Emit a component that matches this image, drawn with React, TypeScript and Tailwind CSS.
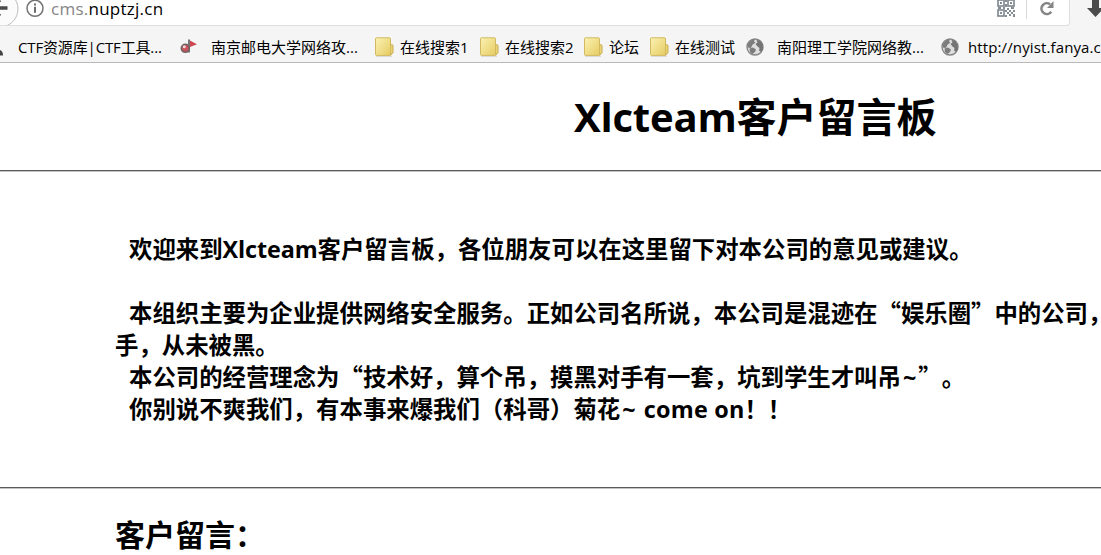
import type { ReactNode } from 'react'

function BackIcon() {
  return (
    <svg width="20" height="28" viewBox="0 0 20 28" className="shrink-0">
      <circle cx="0" cy="9" r="18" fill="#fbfbfb" stroke="#bdbdbd" />
      <path d="M-9 8H7.5M-9 8l9-8M-9 8l9 8" fill="none" stroke="#4a4a4a" strokeWidth="3.4" />
    </svg>
  )
}

function InfoIcon() {
  return (
    <svg width="18" height="18" viewBox="0 0 18 18" className="shrink-0">
      <circle cx="9" cy="8.3" r="8" fill="none" stroke="#737373" strokeWidth="1.5" />
      <rect x="8" y="3.5" width="2" height="2" fill="#6b6b6b" />
      <rect x="8" y="6.8" width="2" height="6" fill="#6b6b6b" />
    </svg>
  )
}

function QrIcon() {
  return (
    <svg width="18" height="17" viewBox="0 1 18 17" className="shrink-0">
      <g fill="none" stroke="#838b94" strokeWidth="1.7">
        <rect x="1" y="1" width="6" height="6" />
        <rect x="11" y="1" width="6" height="6" />
        <rect x="1" y="11" width="6" height="6" />
      </g>
      <path
        d="M3 3h2v2H3zM13 3h2v2h-2zM3 13h2v2H3zM8 1h2v2H8zM8 5h2v3H8zM1 8h3v2H1zM6 8h2v2H6zM10 9h2v2h-2zM14 8h3v2h-3zM8 11h2v2H8zM12 11h2v2h-2zM16 11h2v2h-2zM10 13h2v2h-2zM14 13h2v2h-2zM8 16h2v2H8zM12 15h2v2h-2zM16 15h2v3h-2z"
        fill="#838b94"
      />
    </svg>
  )
}

function ReloadIcon() {
  return (
    <svg width="16" height="18" viewBox="0 0 16 18" className="shrink-0">
      <path d="M10 4.2A5.4 5.4 0 1 0 11.3 11.8" fill="none" stroke="#858585" strokeWidth="2.6" />
      <path d="M13.5 1v7H7z" fill="#858585" />
    </svg>
  )
}

function DownloadIcon() {
  return (
    <svg width="14" height="18" viewBox="0 0 14 18" className="shrink-0">
      <path d="M5 0h7v8h5L8.5 17 0 8h5z" fill="#4c4c4c" />
    </svg>
  )
}

function FlagIcon() {
  return (
    <svg width="18" height="16" viewBox="0 0 18 16" className="shrink-0">
      <path d="M9 1l8 4.2L10 8z" fill="#cf4652" />
      <path d="M9 0.5v13" stroke="#777" strokeWidth="2" />
      <circle cx="5.3" cy="9.3" r="4" fill="#c9525d" stroke="#6e6262" strokeWidth="1.6" />
      <circle cx="4.3" cy="7.8" r="1.5" fill="#e9d9d9" />
    </svg>
  )
}

function FolderIcon() {
  return (
    <svg width="19" height="20" viewBox="0 0 19 20" className="shrink-0">
      <defs>
        <linearGradient id="folder" x1="0" y1="0" x2="1" y2="1">
          <stop offset="0" stopColor="#fbf3b4" />
          <stop offset="1" stopColor="#e6cb62" />
        </linearGradient>
      </defs>
      <path d="M1 19.3h16" stroke="#d5d5d0" />
      <path d="M13 7.5h3.5q1.5 0 1.5 1.5v6.5l-2 2.5h-3z" fill="#ead373" stroke="#c9ac50" />
      <rect x="0.5" y="0.8" width="15" height="17.6" rx="1" fill="url(#folder)" stroke="#d2b95f" />
    </svg>
  )
}

function GlobeIcon() {
  return (
    <svg width="18" height="18" viewBox="0 0 18 18" className="shrink-0">
      <circle cx="9" cy="9" r="8" fill="#dedede" stroke="#858585" strokeWidth="1.4" />
      <path d="M2 6q2.5-4.5 7-5l-1 2.5 1.5 1-3 2.2L5 10l-3.5-.6z" fill="#7c7c7c" />
      <path d="M10.5 2l3.5.5 2.8 4.5.2 4-2 3-2-1.5.5-2.5-2-1.5-2-2.5 2-1.5z" fill="#747474" />
      <path d="M3.5 10.5l3.5-1 3 2-1 2.5-2.5 2-2.5-2z" fill="#7c7c7c" />
    </svg>
  )
}

function AccountIcon() {
  return (
    <svg width="4" height="18" viewBox="0 0 4 18" className="shrink-0">
      <path d="M0 12q3 1 3 5.5H0z" fill="#444" />
    </svg>
  )
}

interface Bookmark {
  icon: ReactNode
  label: string
  width: string
  gap: string
}

const bookmarks: Bookmark[] = [
  { icon: <AccountIcon />, label: 'CTF资源库|CTF工具...', width: 'w-[180px] tracking-[-0.15px]', gap: 'gap-[14px]' },
  { icon: <FlagIcon />, label: '南京邮电大学网络攻...', width: 'w-[195px]', gap: 'gap-[13px]' },
  { icon: <FolderIcon />, label: '在线搜索1', width: 'w-[105px]', gap: 'gap-[6px]' },
  { icon: <FolderIcon />, label: '在线搜索2', width: 'w-[104px]', gap: 'gap-[6px]' },
  { icon: <FolderIcon />, label: '论坛', width: 'w-[66px]', gap: 'gap-[6px]' },
  { icon: <FolderIcon />, label: '在线测试', width: 'w-[96px]', gap: 'gap-[6px]' },
  { icon: <GlobeIcon />, label: '南阳理工学院网络教...', width: 'w-[195px]', gap: 'gap-[13px]' },
  { icon: <GlobeIcon />, label: 'http://nyist.fanya.c', width: 'w-[170px] tracking-[0.12px]', gap: 'gap-[9px]' },
]

function Latin({ children }: { children: ReactNode }) {
  return <span className="font-['Open_Sans','Noto_Sans_CJK_SC',sans-serif] tracking-[-0.005em]">{children}</span>
}

function Tilde() {
  return <span className="px-[2px] font-['Open_Sans',sans-serif]">~</span>
}

function Toolbar() {
  return (
    <header className="bg-[#f5f5f5] border-b border-[#b9b9b9] h-[63px]">
      <div className="flex h-[26px]">
        <div className="flex w-[1070px] shrink-0 overflow-hidden bg-white border-b border-r border-[#dedede] rounded-br-sm">
          <BackIcon />
          <div className="flex items-start gap-[7px] pl-[6px]">
            <InfoIcon />
            <span className="text-[17px] leading-[18px] tracking-[0.25px] text-black font-['Open_Sans',sans-serif]">
              <span className="text-[#858585]">cms.</span>nuptzj.cn
            </span>
          </div>
          <div className="ml-auto flex items-start">
            <QrIcon />
            <div className="ml-[11px] mr-[13px] h-[19px] w-px bg-[#dadada]" />
            <ReloadIcon />
            <div className="w-[13px]" />
          </div>
        </div>
        <div className="pl-[17px]">
          <DownloadIcon />
        </div>
      </div>
      <nav className="flex h-[36px] items-center pt-[6px] text-[15px] text-black font-['Open_Sans','Noto_Sans_CJK_SC',sans-serif]">
        {bookmarks.map((item) => (
          <div key={item.label} className={`flex shrink-0 items-center leading-5 ${item.width} ${item.gap}`}>
            {item.icon}
            <span>{item.label}</span>
          </div>
        ))}
      </nav>
    </header>
  )
}

export default function App() {
  return (
    <div lang="zh-CN" className="h-[555px] w-[1101px] overflow-hidden whitespace-nowrap bg-white text-black [text-spacing-trim:space-all] font-['Noto_Sans_CJK_SC',sans-serif]">
      <Toolbar />
      <main className="font-bold">
        <h1 className="h-[107px] pl-[574px] pt-[22px] text-[40px] leading-[60px]">
          <Latin>Xlcteam</Latin>客户留言板
        </h1>
        <hr className="h-[2px] border-t border-b border-t-[#5b5b5b] border-b-[#c4c4c4]" />
        <div className="h-[315px] whitespace-pre pl-[115px] pt-[60px] text-[23.4px] leading-[32px]">
          <p className="h-8 pl-[14px]">
            欢迎来到<Latin>Xlcteam</Latin>客户留言板，各位朋友可以在这里留下对本公司的意见或建议。
          </p>
          <p className="mt-8 h-8 pl-[14px]">本组织主要为企业提供网络安全服务。正如公司名所说，本公司是混迹在“娱乐圈”中的公司，</p>
          <p className="h-8">手，从未被黑。</p>
          <p className="h-8 pl-[14px]">
            本公司的经营理念为“技术好，算个吊，摸黑对手有一套，坑到学生才叫吊<Tilde />”。
          </p>
          <p className="h-8 pl-[14px]">
            你别说不爽我们，有本事来爆我们（科哥）菊花<Tilde />
            <span className="font-['Open_Sans',sans-serif] tracking-[0.2px]"> come on</span>！！
          </p>
        </div>
        <hr className="h-[2px] border-t border-b border-t-[#5b5b5b] border-b-[#c4c4c4]" />
        <h2 className="pl-[115px] pt-[22px] text-[30px] leading-[45px]">客户留言：</h2>
      </main>
    </div>
  )
}
